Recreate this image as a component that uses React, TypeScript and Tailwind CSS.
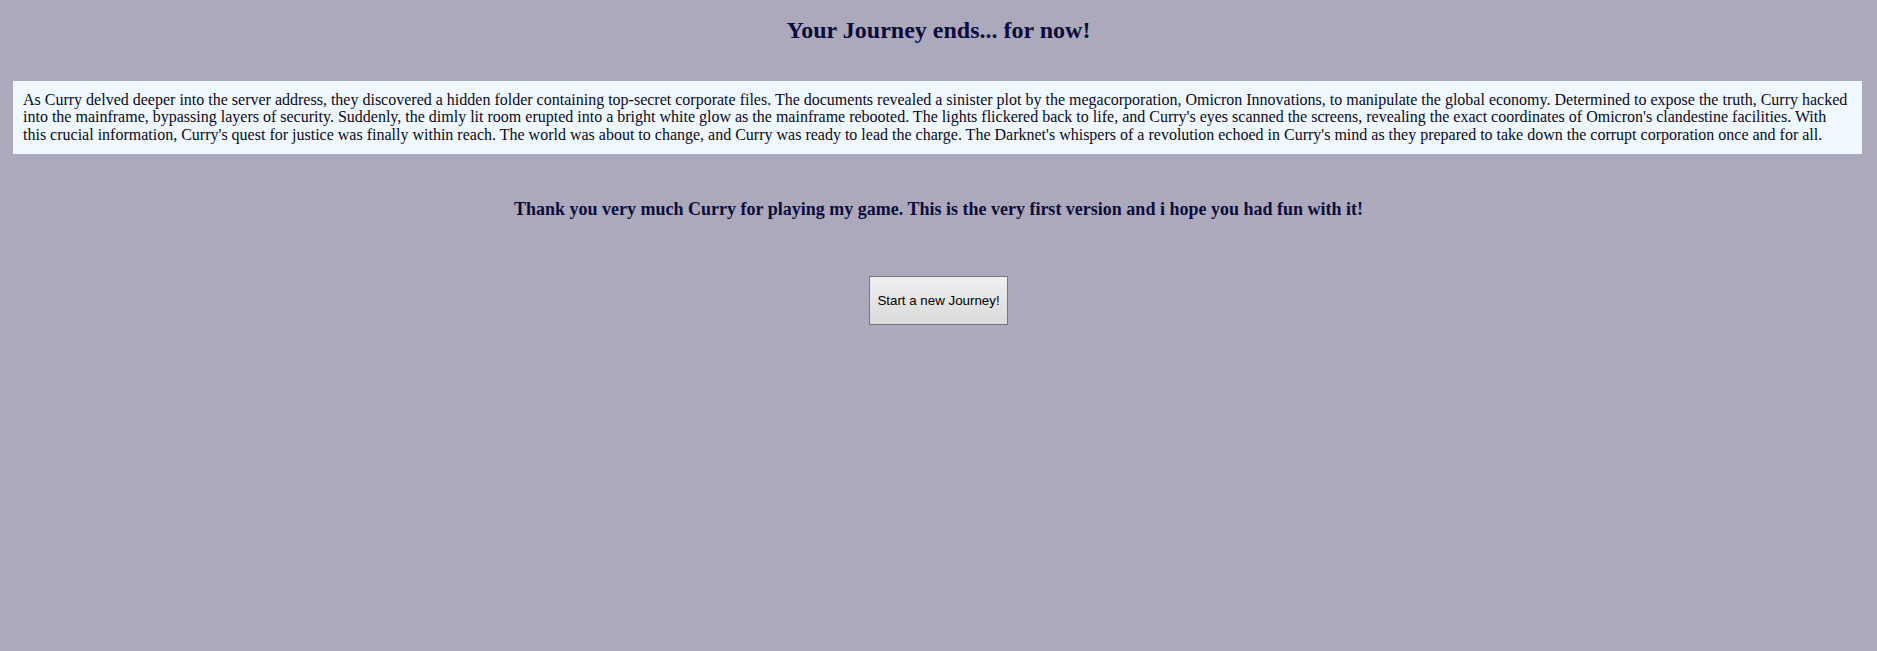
const story =
  "As Curry delved deeper into the server address, they discovered a hidden folder containing top-secret corporate files. The documents revealed a sinister plot by the megacorporation, Omicron Innovations, to manipulate the global economy. Determined to expose the truth, Curry hacked into the mainframe, bypassing layers of security. Suddenly, the dimly lit room erupted into a bright white glow as the mainframe rebooted. The lights flickered back to life, and Curry's eyes scanned the screens, revealing the exact coordinates of Omicron's clandestine facilities. With this crucial information, Curry's quest for justice was finally within reach. The world was about to change, and Curry was ready to lead the charge. The Darknet's whispers of a revolution echoed in Curry's mind as they prepared to take down the corrupt corporation once and for all.";

const App = () => {
  return (
    <div className="min-h-[651px] bg-[#aba9bb] font-['Liberation_Serif',serif] pt-[17px] flex flex-col">
      <h2 className="text-center text-[24px] leading-[26.6px] font-bold text-[#0c0c3c]">
        Your Journey ends... for now!
      </h2>

      <div className="mt-[37px] ml-[13px] mr-[15px] bg-[#f0f8ff] px-[10px] py-[10px] text-[16px] leading-[17.7px] text-[#0a0a22]">
        {story}
      </div>

      <h3 className="mt-[45px] text-center text-[18px] leading-[20.7px] font-bold text-[#0c0c3c]">
        Thank you very much Curry for playing my game. This is the very first version and i hope you had fun with it!
      </h3>

      <div className="mt-[57px] flex justify-center">
        <button className="h-[49px] w-[139px] border border-[#767676] bg-gradient-to-b from-[#efefef] to-[#dadada] font-['Liberation_Sans',Arial,sans-serif] text-[13.33px] text-black">
          Start a new Journey!
        </button>
      </div>
    </div>
  );
};

export default App;
